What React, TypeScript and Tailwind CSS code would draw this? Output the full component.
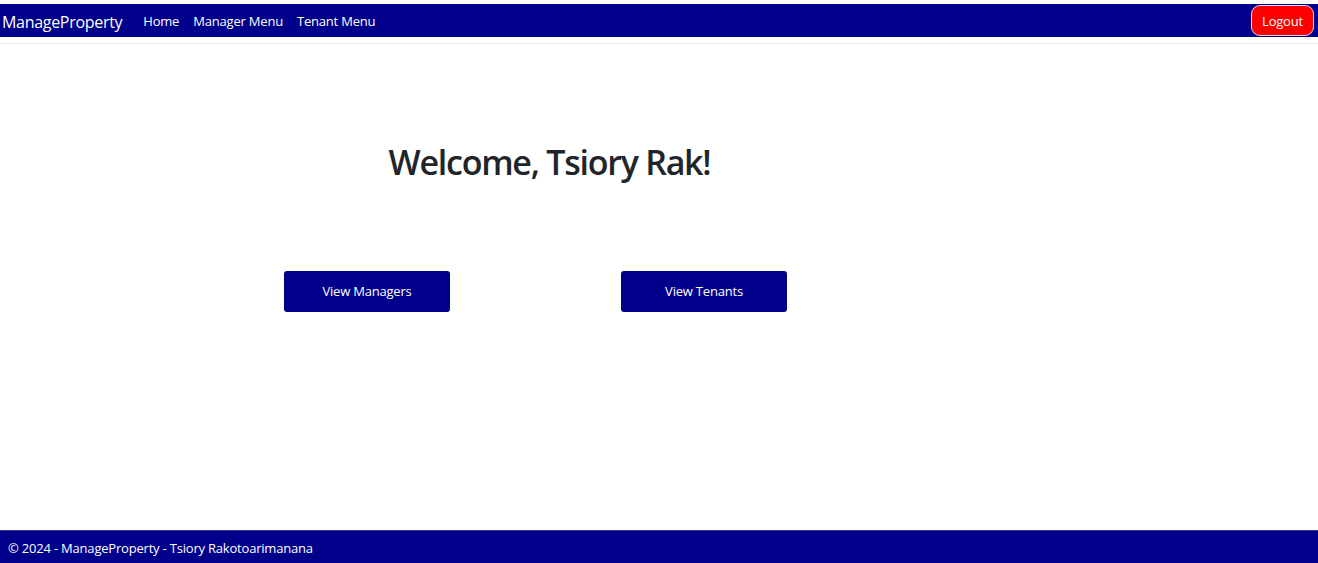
import React from "react";

const navLinks = ["Home", "Manager Menu", "Tenant Menu"];

const App = () => {
    return (
        <div className="flex h-[563px] flex-col bg-white font-['Open_Sans',sans-serif] text-[#212529]">
            {/* Header */}
            <header className="pt-1">
                <nav className="flex h-[33px] items-center justify-between bg-[#00008b] pl-[2px] pr-[4px]">
                    <div className="flex items-center pt-[2px]">
                        <a className="text-[16px] tracking-[-0.3px] text-white">ManageProperty</a>
                        <ul className="ml-[21px] flex gap-[14px]">
                            {navLinks.map((link) => (
                                <li key={link} className="text-[13px] tracking-[-0.2px] text-white">
                                    {link}
                                </li>
                            ))}
                        </ul>
                    </div>
                    <button className="h-[31px] w-[63px] rounded-[9px] border border-[#d8d8f0] bg-[#ff0000] pt-[2px] text-[13px] tracking-[-0.2px] text-white">
                        Logout
                    </button>
                </nav>
                <div className="mt-[6px] h-[1px] bg-[#ececec]" />
            </header>

            {/* Main */}
            <main className="flex-1">
                <h1 className="ml-[101px] mt-[94px] w-[897px] text-center text-[34px] leading-[48px] font-semibold tracking-[-1.25px]">
                    Welcome, Tsiory Rak!
                </h1>
                <div className="ml-[284px] mt-[85px] flex gap-[171px]">
                    <button className="h-[41px] w-[166px] rounded-[3px] bg-[#00008b] text-[13px] tracking-[-0.2px] text-white">
                        View Managers
                    </button>
                    <button className="h-[41px] w-[166px] rounded-[3px] bg-[#00008b] text-[13px] tracking-[-0.2px] text-white">
                        View Tenants
                    </button>
                </div>
            </main>

            {/* Footer */}
            <footer className="flex h-[33px] items-center border-t border-[#3a3aa0] bg-[#00008b] pl-[8px] pt-[4px] text-[13px] tracking-[-0.2px] text-white">
                © 2024 - ManageProperty - Tsiory Rakotoarimanana
            </footer>
        </div>
    );
};

export default App;
